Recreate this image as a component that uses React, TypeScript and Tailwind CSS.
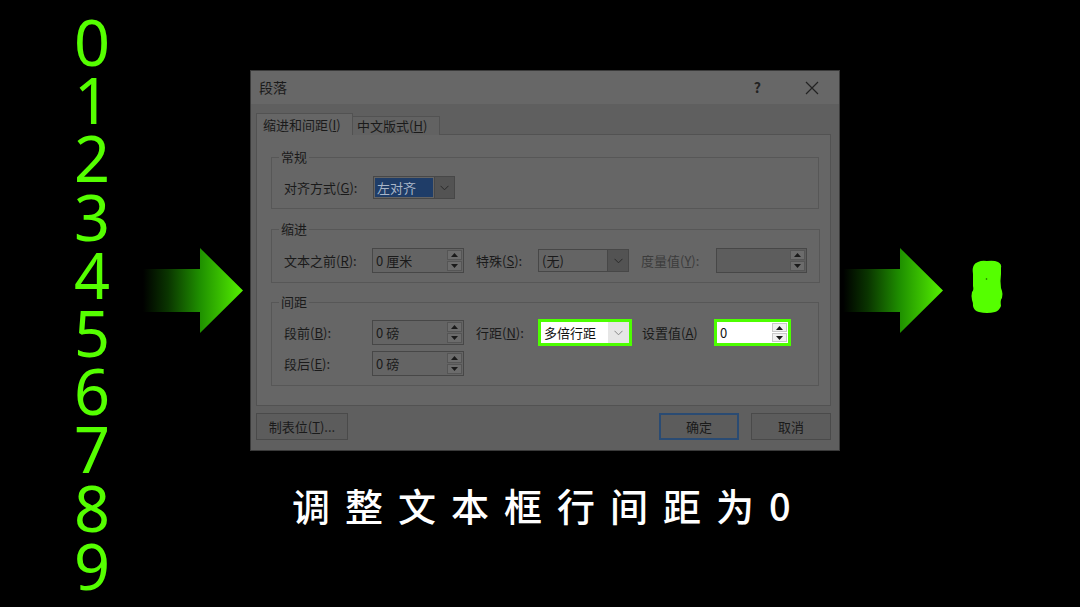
import React from "react";

const cjk = "font-['Noto_Sans_CJK_SC','Noto_Sans',sans-serif]";

function Arrow() {
  return (
    <svg width="100" height="85" viewBox="0 0 100 85">
      <defs>
        <linearGradient id="ag" x1="0" y1="0" x2="1" y2="0">
          <stop offset="0" stopColor="#000000" />
          <stop offset="0.25" stopColor="#0a3500" />
          <stop offset="0.57" stopColor="#1f9000" />
          <stop offset="1" stopColor="#55f000" />
        </linearGradient>
      </defs>
      <path d="M0 21 H57 V0 L100 42.5 L57 85 V64 H0 Z" fill="url(#ag)" />
    </svg>
  );
}

function Blob() {
  return (
    <svg width="36" height="54" viewBox="0 0 36 54">
      <path
        d="M9 2 Q13 0 18 1 Q25 0 29 2 Q33 4 32 8 L32 14 Q31 20 32 28 L33 31 Q34 34 33 38 Q31 40 32 46 Q30 51 26 52 Q18 54 10 52 Q5 51 4 46 Q4 42 3 40 Q2 36 3 32 Q5 30 4 26 L4 14 Q3 8 5 5 Q6 3 9 2 Z"
        fill="#55ff00"
      />
      <circle cx="17.5" cy="19" r="0.8" fill="#1a5a00" />
    </svg>
  );
}

function Tri({ up }: { up: boolean }) {
  return (
    <svg width="7" height="4" viewBox="0 0 7 4">
      <path d={up ? "M0 4 L3.5 0 L7 4 Z" : "M0 0 L7 0 L3.5 4 Z"} fill="#1a1a1a" />
    </svg>
  );
}

function Spin({ value, w, disabled, hl }: { value: string; w: number; disabled?: boolean; hl?: boolean }) {
  return (
    <div
      className={`flex items-stretch ${hl ? "h-[27px] border-[3px] border-[#4dff00] bg-white" : "h-[25px] border border-[#474747] " + (disabled ? "bg-[#5d5d5d]" : "bg-[#646464]")}`}
      style={{ width: w }}
    >
      <div className={`flex-1 flex items-center pl-[3px] text-[13px] ${hl ? "text-[#111]" : "text-[#1a1a1a]"}`}>{value}</div>
      <div className="w-[17px] flex flex-col gap-[1px] p-[1px]">
        <div className={`flex-1 flex items-center justify-center border ${hl ? "border-[#c8c8c8] bg-[#f0f0f0]" : "border-[#555] bg-[#6c6c6c]"}`}>
          <Tri up />
        </div>
        <div className={`flex-1 flex items-center justify-center border ${hl ? "border-[#c8c8c8] bg-[#f0f0f0]" : "border-[#555] bg-[#6c6c6c]"}`}>
          <Tri up={false} />
        </div>
      </div>
    </div>
  );
}

function Chevron({ color }: { color: string }) {
  return (
    <svg width="9" height="6" viewBox="0 0 9 6">
      <path d="M0.5 0.8 L4.5 4.8 L8.5 0.8" stroke={color} strokeWidth="1" fill="none" />
    </svg>
  );
}

function Select({ value, w, sel, hl }: { value: string; w: number; sel?: boolean; hl?: boolean }) {
  return (
    <div
      className={`flex items-stretch ${hl ? "h-[27px] border-[3px] border-[#4dff00] bg-white" : "h-[23px] border border-[#474747] bg-[#646464]"}`}
      style={{ width: w }}
    >
      <div className="flex-1 flex items-center p-[1px]">
        {sel ? (
          <span className="h-full w-[58px] bg-[#1f3d68] text-[#a9b6c8] text-[13px] flex items-center pl-[2px]">{value}</span>
        ) : (
          <span className={`pl-[2px] text-[13px] ${hl ? "text-[#111]" : "text-[#1a1a1a]"}`}>{value}</span>
        )}
      </div>
      <div className={`w-[21px] flex items-center justify-center ${hl ? "bg-[#e6e6e6]" : "bg-[#535353] border-l border-[#474747]"}`}>
        <Chevron color={hl ? "#888" : "#2a2a2a"} />
      </div>
    </div>
  );
}

function Group({ title, children, className }: { title: string; children: React.ReactNode; className?: string }) {
  return (
    <fieldset className={`border border-[#575757] px-[12px] ${className ?? ""}`}>
      <legend className="ml-[-5px] px-[2px] text-[13px] leading-[18px] text-[#1a1a1a]">{title}</legend>
      {children}
    </fieldset>
  );
}

function L({ text, k, rest, w, dim }: { text: string; k: string; rest: string; w: number; dim?: boolean }) {
  return (
    <span className={`text-[13px] ${dim ? "text-[#3c3c3c]" : "text-[#1a1a1a]"}`} style={{ width: w }}>
      {text}(<span className="underline">{k}</span>){rest}
    </span>
  );
}

function Dialog() {
  return (
    <div className={`w-[590px] h-[381px] border border-[#3a3a3a] bg-[#5f5f5f] flex flex-col ${cjk}`}>
      <div className="h-[33px] bg-[#676767] flex items-center pl-[8px] pr-[20px] text-[#1a1a1a]">
        <span className="text-[14px]">段落</span>
        <span className="ml-auto text-[14px] font-bold text-[#222]">?</span>
        <svg className="ml-[44px]" width="14" height="14" viewBox="0 0 14 14">
          <path d="M1 1 L13 13 M13 1 L1 13" stroke="#222" strokeWidth="1.2" />
        </svg>
      </div>
      <div className="flex-1 flex flex-col pl-[5px] pr-[8px] pt-[9px]">
        <div className="flex items-end h-[22px] relative z-10">
          <div className="h-[22px] w-[97px] border border-b-0 border-[#525252] bg-[#666] flex items-center pl-[6px] text-[13px] text-[#1a1a1a]">
            缩进和间距(<span className="underline">I</span>)
          </div>
          <div className="h-[19px] w-[87px] border border-l-0 border-b-0 border-[#525252] bg-[#626262] flex items-center pl-[4px] text-[13px] text-[#1a1a1a]">
            中文版式(<span className="underline">H</span>)
          </div>
        </div>
        <div className="h-[272px] -mt-[1px] border border-[#525252] bg-[#666] pl-[14px] pr-[11px] pt-[13px] flex flex-col">
          <Group title="常规" className="pb-[9px]">
            <div className="flex items-center mt-[10px]">
              <L text="对齐方式" k="G" rest=":" w={89} />
              <Select value="左对齐" w={82} sel />
            </div>
          </Group>
          <Group title="缩进" className="pb-[9px] mt-[11px]">
            <div className="flex items-center mt-[10px]">
              <L text="文本之前" k="R" rest=":" w={88} />
              <Spin value="0 厘米" w={92} />
              <span className="w-[12px]" />
              <L text="特殊" k="S" rest=":" w={62} />
              <Select value="(无)" w={91} />
              <span className="w-[12px]" />
              <L text="度量值" k="Y" rest=":" w={75} dim />
              <Spin value="" w={91} disabled />
            </div>
          </Group>
          <Group title="间距" className="pb-[9px] mt-[10px]">
            <div className="flex items-center mt-[8px]">
              <L text="段前" k="B" rest=":" w={88} />
              <Spin value="0 磅" w={92} />
              <span className="w-[12px]" />
              <L text="行距" k="N" rest=":" w={62} />
              <Select value="多倍行距" w={94} hl />
              <span className="w-[10px]" />
              <L text="设置值" k="A" rest="" w={72} />
              <Spin value="0" w={77} hl />
            </div>
            <div className="flex items-center mt-[5px]">
              <L text="段后" k="E" rest=":" w={88} />
              <Spin value="0 磅" w={92} />
            </div>
          </Group>
        </div>
        <div className="flex mt-[7px] text-[13px] text-[#1a1a1a]">
          <div className="w-[92px] h-[27px] border border-[#4a4a4a] bg-[#5c5c5c] flex items-center justify-center">
            制表位(<span className="underline">T</span>)...
          </div>
          <div className="ml-auto w-[80px] h-[27px] border-2 border-[#2a4b73] bg-[#5c5c5c] flex items-center justify-center">
            确定
          </div>
          <div className="ml-[12px] w-[80px] h-[27px] border border-[#4a4a4a] bg-[#5c5c5c] flex items-center justify-center">
            取消
          </div>
        </div>
      </div>
    </div>
  );
}

export default function App() {
  const digits = ["0", "1", "2", "3", "4", "5", "6", "7", "8", "9"];
  return (
    <div className="w-[1080px] h-[607px] bg-black flex overflow-hidden">
      <div className="w-[143px] shrink-0 pt-[13px]">
        <div className="ml-[62px] w-[60px] text-center font-['Noto_Sans',sans-serif] text-[63px] leading-[58.2px] text-[#55ff00]">
          {digits.map((d) => (
            <div key={d}>{d}</div>
          ))}
        </div>
      </div>
      <div className="flex flex-col pt-[70px]">
        <div className="flex items-start">
          <div className="mt-[178px]">
            <Arrow />
          </div>
          <div className="ml-[7px]">
            <Dialog />
          </div>
          <div className="mt-[178px] ml-[3px]">
            <Arrow />
          </div>
          <div className="mt-[190px] ml-[26px]">
            <Blob />
          </div>
        </div>
        <div className={`ml-[149px] mt-[35px] text-[38px] leading-[38px] tracking-[15px] font-medium text-white ${cjk}`}>
          调整文本框行间距为0
        </div>
      </div>
    </div>
  );
}
